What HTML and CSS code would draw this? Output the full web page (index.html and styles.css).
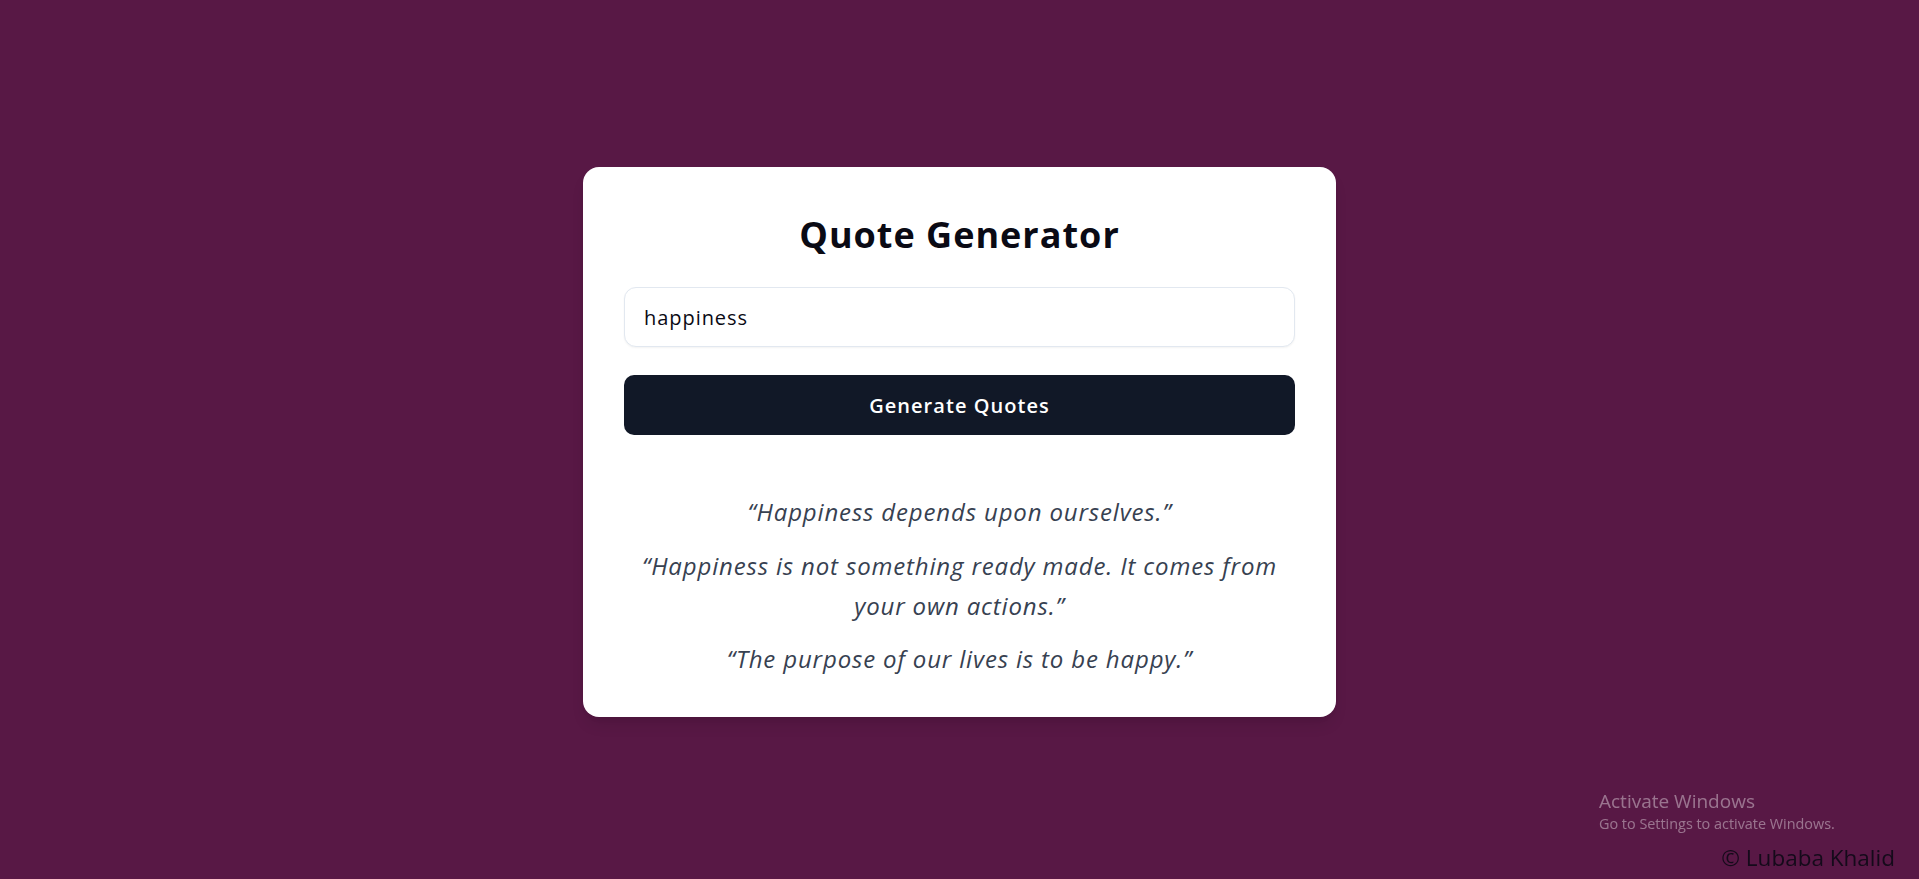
FILE: index.html
```html
<!DOCTYPE html>
<html lang="en">
<head>
<meta charset="utf-8">
<title>Quote Generator</title>
<link rel="stylesheet" href="styles.css">
</head>
<body>
<main class="page">
  <section class="card">
    <h1 class="title">Quote Generator</h1>
    <input class="topic" type="text" value="happiness">
    <button class="generate" type="button">Generate Quotes</button>
    <div class="quotes">
      <p class="quote">“Happiness depends upon ourselves.”</p>
      <p class="quote">“Happiness is not something ready made. It comes from your own actions.”</p>
      <p class="quote">“The purpose of our lives is to be happy.”</p>
    </div>
  </section>
</main>
<div class="watermark">
  <div class="wm-title">Activate Windows</div>
  <div class="wm-sub">Go to Settings to activate Windows.</div>
</div>
<footer class="credit">© Lubaba Khalid</footer>
</body>
</html>
```
FILE: styles.css
```css
* { box-sizing: border-box; }
html, body { margin: 0; padding: 0; }
body {
  background: #581845;
  font-family: "Open Sans", "Noto Sans", sans-serif;
  min-height: 100vh;
}
.page {
  min-height: 100vh;
  padding-top: 5px;
  display: flex;
  align-items: center;
  justify-content: center;
}
.card {
  width: 753px;
  background: #ffffff;
  border-radius: 16px;
  padding: 48px 41px 38px;
  display: flex;
  flex-direction: column;
  box-shadow: 0 10px 15px -3px rgba(0,0,0,0.1), 0 4px 6px -4px rgba(0,0,0,0.1);
}
.title {
  margin: 0 0 32px;
  font-size: 36px;
  line-height: 40px;
  font-weight: 700;
  letter-spacing: 1px;
  text-align: center;
  color: #0a0a14;
}
.topic {
  height: 60px;
  width: 100%;
  border: 1px solid #e2e8f0;
  border-radius: 12px;
  padding: 0 19px;
  font-family: inherit;
  font-size: 20px;
  letter-spacing: 0.95px;
  color: #0a0a14;
  background: #fff;
  box-shadow: 0 1px 2px rgba(0,0,0,0.05);
  outline: none;
}
.generate {
  margin-top: 28px;
  height: 60px;
  width: 100%;
  border: none;
  border-radius: 10px;
  background: #111827;
  color: #ffffff;
  font-family: inherit;
  font-size: 20px;
  font-weight: 600;
  letter-spacing: 1.05px;
  cursor: pointer;
}
.quotes {
  margin-top: 57px;
  display: flex;
  flex-direction: column;
  gap: 13.5px;
}
.quote {
  margin: 0;
  font-size: 24px;
  line-height: 40px;
  font-style: italic;
  letter-spacing: 0.84px;
  text-align: center;
  color: #374151;
}
.watermark {
  position: fixed;
  left: 1599px;
  top: 789px;
  color: rgba(255,255,255,0.4);
  font-family: "Open Sans", "Noto Sans", sans-serif;
  pointer-events: none;
}
.wm-title { font-size: 19px; line-height: 25px; }
.wm-sub { font-size: 14.4px; line-height: 20px; }
.credit {
  position: fixed;
  right: 24px;
  bottom: 6px;
  font-size: 22.5px;
  line-height: 30px;
  color: #140a1a;
}
```
